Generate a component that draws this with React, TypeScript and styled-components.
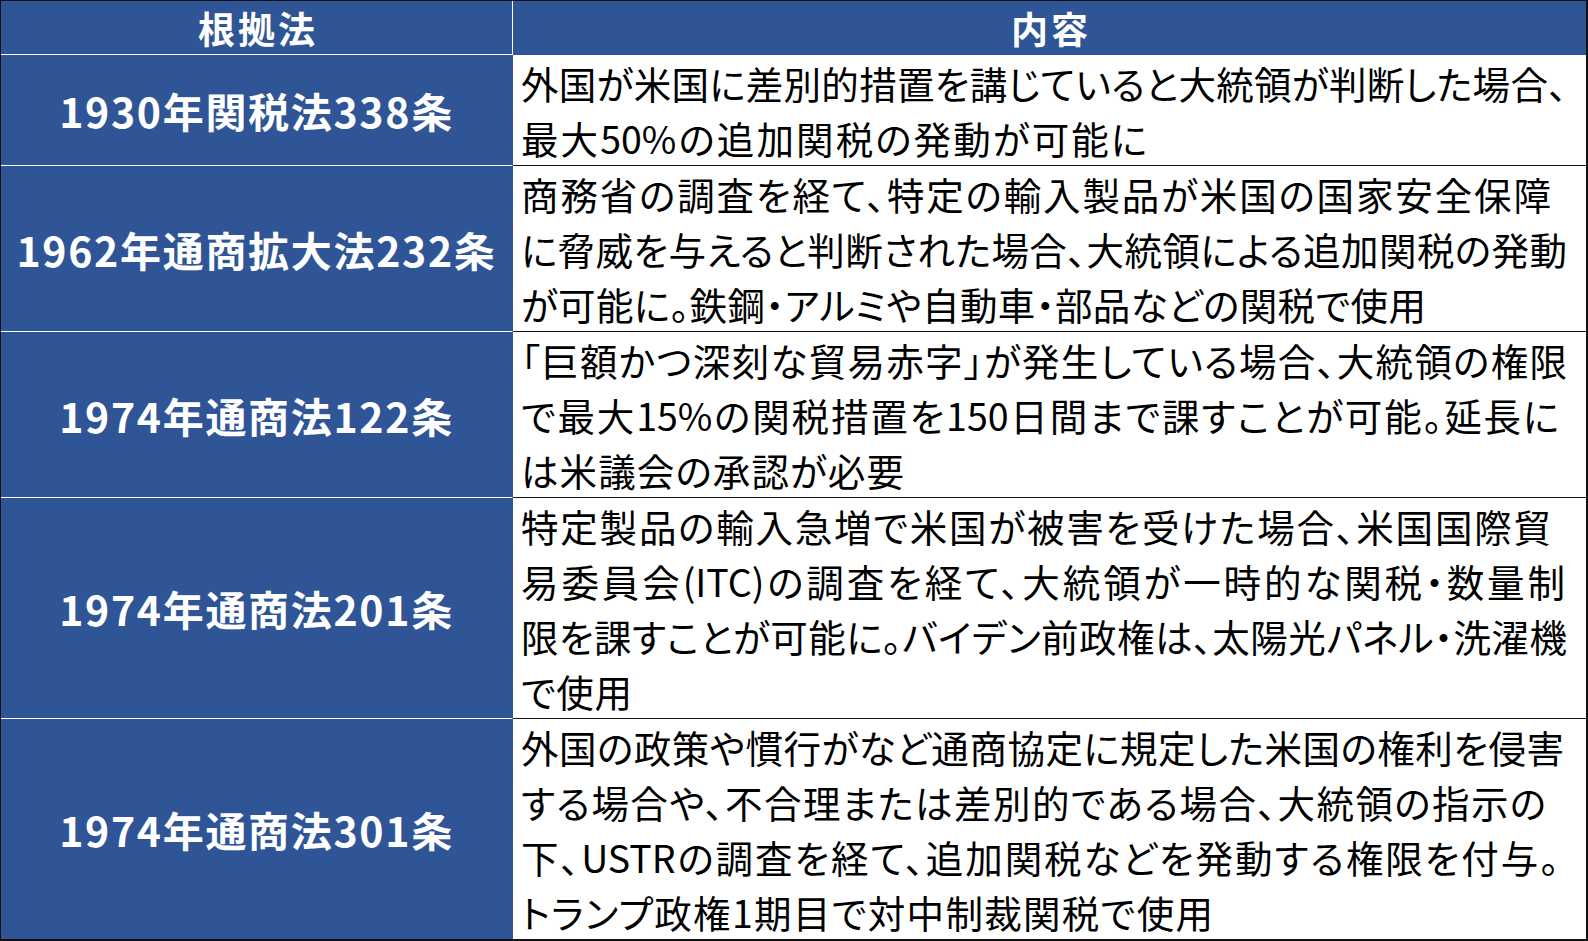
import styled, { createGlobalStyle } from 'styled-components';

const GlobalStyle = createGlobalStyle`
    html, body {
        margin: 0;
        padding: 0;
        background: #ffffff;
        overflow: hidden;
    }
    body {
        font-family: "Noto Sans CJK JP", "Noto Sans", sans-serif;
    }
`;

const Table = styled.div`
    display: grid;
    grid-template-columns: 512px 1073px;
    width: 1585px;
    border-style: solid;
    border-color: #111111;
    border-width: 1px 2px 2px 1px;
    background: #ffffff;
    overflow: hidden;
`;

const HeadCell = styled.div<{ $last?: boolean }>`
    height: 53px;
    background: #2f5597;
    color: #ffffff;
    font-weight: 700;
    font-size: 37px;
    letter-spacing: 3px;
    padding-left: 3px;
    display: flex;
    align-items: center;
    justify-content: center;
    border-right: ${(p) => (p.$last ? 'none' : '1px solid #ffffff')};
    border-bottom: 1px solid ${(p) => (p.$last ? '#2f5597' : '#ffffff')};
`;

const LawCell = styled.div<{ $last?: boolean }>`
    background: #2f5597;
    color: #ffffff;
    font-weight: 700;
    font-size: 41px;
    letter-spacing: 1.7px;
    display: flex;
    align-items: center;
    justify-content: center;
    border-right: 1px solid #2f5597;
    border-bottom: ${(p) => (p.$last ? 'none' : '1px solid #ffffff')};
    white-space: nowrap;
`;

const TextCell = styled.div<{ $last?: boolean }>`
    color: #000000;
    font-size: 37.5px;
    line-height: 55px;
    padding-left: 8px;
    white-space: nowrap;
    overflow: hidden;
    font-feature-settings: "palt";
    border-bottom: ${(p) => (p.$last ? 'none' : '1px solid #111111')};
`;

const Line = styled.div<{ $width: number }>`
    height: 55px;
    width: ${(p) => p.$width}px;
    text-align: justify;
    text-align-last: justify;
`;

interface TextLine {
	text: string;
	width: number;
}

interface Row {
	law: string;
	lines: TextLine[];
}

const rows: Row[] = [
	{
		law: '1930年関税法338条',
		lines: [
			{ text: '外国が米国に差別的措置を講じていると大統領が判断した場合、', width: 1046 },
			{ text: '最大50%の追加関税の発動が可能に', width: 626 },
		],
	},
	{
		law: '1962年通商拡大法232条',
		lines: [
			{ text: '商務省の調査を経て、特定の輸入製品が米国の国家安全保障', width: 1030 },
			{ text: 'に脅威を与えると判断された場合、大統領による追加関税の発動', width: 1046 },
			{ text: 'が可能に。鉄鋼・アルミや自動車・部品などの関税で使用', width: 905 },
		],
	},
	{
		law: '1974年通商法122条',
		lines: [
			{ text: '「巨額かつ深刻な貿易赤字」が発生している場合、大統領の権限', width: 1046 },
			{ text: 'で最大15%の関税措置を150日間まで課すことが可能。延長に', width: 1038 },
			{ text: 'は米議会の承認が必要', width: 383 },
		],
	},
	{
		law: '1974年通商法201条',
		lines: [
			{ text: '特定製品の輸入急増で米国が被害を受けた場合、米国国際貿', width: 1030 },
			{ text: '易委員会(ITC)の調査を経て、大統領が一時的な関税・数量制', width: 1044 },
			{ text: '限を課すことが可能に。バイデン前政権は、太陽光パネル・洗濯機', width: 1046 },
			{ text: 'で使用', width: 111 },
		],
	},
	{
		law: '1974年通商法301条',
		lines: [
			{ text: '外国の政策や慣行がなど通商協定に規定した米国の権利を侵害', width: 1043 },
			{ text: 'する場合や、不合理または差別的である場合、大統領の指示の', width: 1025 },
			{ text: '下、USTRの調査を経て、追加関税などを発動する権限を付与。', width: 1038 },
			{ text: 'トランプ政権1期目で対中制裁関税で使用', width: 692 },
		],
	},
];

const App = () => {
	return (
		<>
			<GlobalStyle />
			<Table>
				<HeadCell>根拠法</HeadCell>
				<HeadCell $last>内容</HeadCell>
				{rows.map((row, i) => {
					const last = i === rows.length - 1;
					return [
						<LawCell key={`l${i}`} $last={last}>
							{row.law}
						</LawCell>,
						<TextCell key={`t${i}`} $last={last}>
							{row.lines.map((line) => (
								<Line key={line.text} $width={line.width}>
									{line.text}
								</Line>
							))}
						</TextCell>,
					];
				})}
			</Table>
		</>
	);
};

export default App;
